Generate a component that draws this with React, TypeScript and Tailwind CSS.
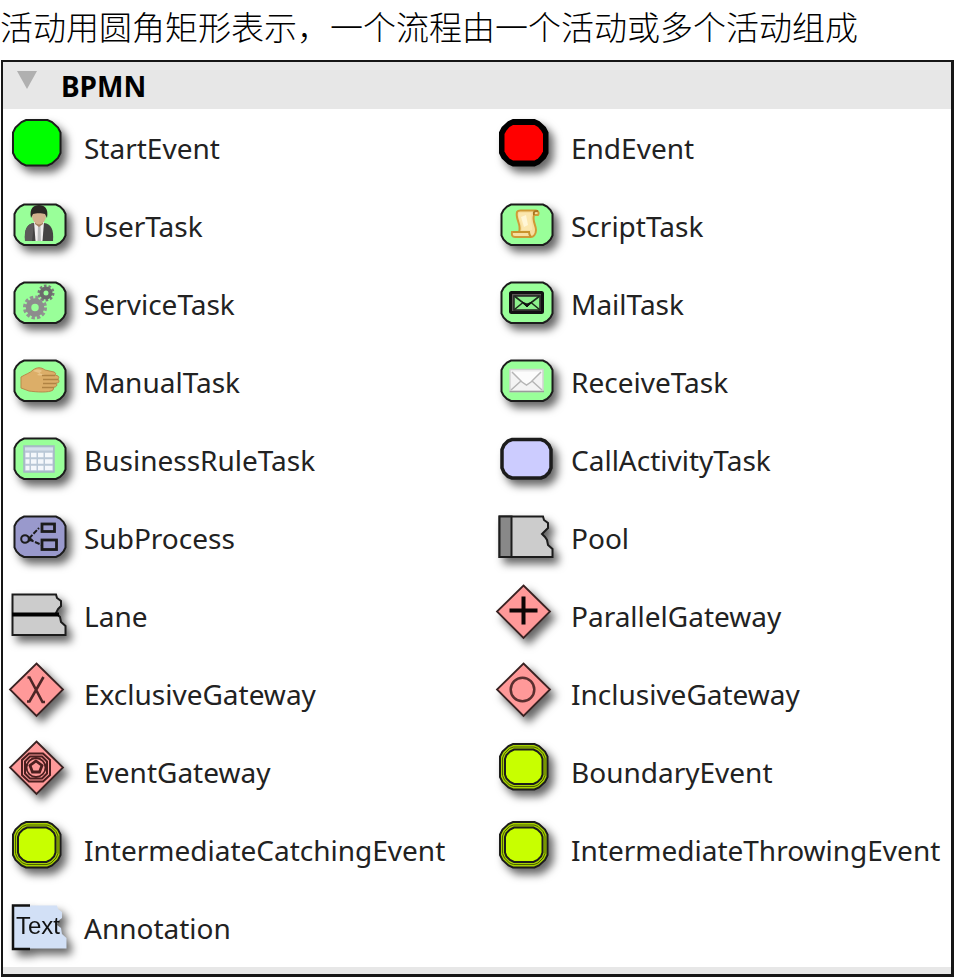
import React from 'react';

const SOFT = '#1c1c1c';
const GREEN = '#99ff99';

const Task = ({ fill = GREEN, heavy = false, children }: { fill?: string; heavy?: boolean; children?: React.ReactNode }) => (
  <>
    {heavy ? (
      <path d="M17 18.5H46L50 20 54 24 56 28.5V47L54 51.5 50 55.5 46 57H17L13 55.5 9 51.5 7 47V28.5L9 24 13 20Z" fill={fill} stroke={SOFT} strokeWidth="3.5" />
    ) : (
      <path d="M16 17.5H48L52 19.5 55.5 23 57.5 27V48.5L55.5 52.5 52 56 48 58H16L12 56 8.5 52.5 6.5 48.5V27L8.5 23 12 19.5Z" fill={fill} stroke={SOFT} strokeWidth="2" />
    )}
    {children}
  </>
);

const EVENT_PATH = 'M18 11H39.5L44 13 50 18.5 52.5 23.5V44L50 49 44 54.5 39.5 56.5H18L13.5 54.5 7.5 49 5 44V23.5L7.5 18.5 13.5 13Z';

const StartIcon = () => <path d={EVENT_PATH} fill="#00ff00" stroke={SOFT} strokeWidth="2" />;

const EndIcon = () => (
  <>
    <path d={EVENT_PATH} fill="#000" stroke="#000" strokeWidth="2" />
    <path d="M18 16H39.5L43 18 46 21.5 48 25V42.5L46 46 43 49.5 39.5 51.5H18L14.5 49.5 11.5 46 9.5 42.5V25L11.5 21.5 14.5 18Z" fill="#ff0000" />
  </>
);

const IntermediateIcon = () => (
  <>
    <path d={EVENT_PATH} fill="#a6d100" stroke={SOFT} strokeWidth="2" />
    <path d="M18.5 14H39L43 15.500 48 20.500 50 25V42.500L48 47 43 52 39 53.500H18.500L14.500 52 9.500 47 7.500 42.500V25L9.500 20.500 14.500 15.500Z" fill="none" stroke="#4c6000" strokeWidth="1" />
    <path d="M19 16.5H38.5L42.5 18.5 46 22 47.5 26V41.5L46 45.5 42.5 49 38.5 51H19L15 49 11.5 45.5 10 41.5V26L11.5 22 15 18.5Z" fill="#c8ff00" stroke={SOFT} strokeWidth="2" />
  </>
);

const Gateway = ({ children }: { children: React.ReactNode }) => (
  <>
    <path d="M28.5 8.5L55 34.5 28.5 61 2 34.5Z" fill="#ff9999" stroke="#3a2222" strokeWidth="1.8" />
    {children}
  </>
);

const UserIcon = () => (
  <Task>
    <path d="M17 54C16 42 19 37 26 36H36C43 37 46 42 45 54Z" fill="#454343" />
    <path d="M17 54C16 42 19 37 26 36L24 54Z" fill="#5c5a5a" />
    <path d="M26 35H36L34.5 54H27.5Z" fill="#f1eeee" />
    <path d="M30 39H32.5L33 54H29.5Z" fill="#bcbcbc" />
    <path d="M27 33H35V37L31 40 27 37Z" fill="#a58062" />
    <ellipse cx="31" cy="28.5" rx="7" ry="9" fill="#d3b08e" />
    <path d="M23 31C21 21 26 18 31 18S41 21 39 31L37 27C34 26 28 26 25 27Z" fill="#2b2724" />
  </Task>
);

const ScriptIcon = () => (
  <Task>
    <path d="M22 25C23 23 25 23.5 27 23.5H41C44 23.5 44 27 43 28H39C37 34 41 38 41 43 41 48 38 50 36 50H20C17 50 16.5 48 17 45H24C27 38 20 32 22 25Z" fill="#f7dfa0" stroke="#d09a35" strokeWidth="2" />
    <path d="M39 28C38 24 40 24 43 24" fill="none" stroke="#a8741f" strokeWidth="2" />
    <path d="M24 26H36C35 33 38 38 37 43H27C28 36 23 33 24 26Z" fill="#fbe7ae" />
    <path d="M26 30L31 28 33 38 29 40Z" fill="#fff6d6" />
    <path d="M18 45H34C34 48 35 49 36 50" fill="none" stroke="#c8932c" strokeWidth="2" />
  </Task>
);

const ServiceIcon = () => (
  <Task>
    <circle cx="27" cy="42.5" r="10" fill="none" stroke="#929292" strokeWidth="4" strokeDasharray="3.2 2.036" />
    <circle cx="27" cy="42.5" r="6.5" fill="none" stroke="#8d8d8d" strokeWidth="5.5" />
    <circle cx="38" cy="28" r="7" fill="none" stroke="#7a7a7a" strokeWidth="3" strokeDasharray="2.5 1.898" />
    <circle cx="38" cy="28" r="4.5" fill="none" stroke="#6c6c6c" strokeWidth="4" />
  </Task>
);

const ManualIcon = () => (
  <Task>
    <path d="M13 34C18 31 22 30 25 27 29 24 33 24 37 27L46 29C48 30 48 31 47 32L50 33C51 34 51 35 50 36L51 38C51 40 50 40 48 40L49 42C48 44 47 44 46 44L45 47C41 50 28 49 21 48L13 45Z" fill="#dcae68" stroke="#b88b4b" strokeWidth="1" />
    <path d="M25 28C28 26 32 26 34 28L29 32C31 33 34 32 37 32" fill="#e9c488" />
    <path d="M34 32.5H47M35 36.5H50M35 40.5H48M34 44.5H46" stroke="#b08343" strokeWidth="1.3" />
  </Task>
);

const MailIcon = () => (
  <Task>
    <rect x="15.5" y="27.5" width="32" height="20" rx="1" fill="#5e5957" stroke="#111" strokeWidth="3" />
    <rect x="19" y="31" width="26" height="14" fill="#8df08d" stroke="#222" strokeWidth="1.5" />
    <path d="M20 31.5L32 41 44 31.5M19.5 44.5L28 37.5M44.5 44.5L36 37.5" fill="none" stroke="#1c2c1c" strokeWidth="1.6" />
    <path d="M27 37L32 42 37 37 32 39Z" fill="#111" stroke="#111" />
  </Task>
);

const ReceiveIcon = () => (
  <Task>
    <rect x="15" y="26.5" width="33" height="22" fill="#f3f3f3" stroke="#d2d2d2" strokeWidth="1.5" />
    <path d="M17 29L27 39 31.5 42 36 39 46 29" fill="#fcfcfc" stroke="#b5b5b5" strokeWidth="1.5" />
    <path d="M16 47L26 38M47 47L37 38" fill="none" stroke="#b5b5b5" strokeWidth="1.5" />
    <path d="M14.5 48.5H49" stroke="#9a9a9a" strokeWidth="1.5" />
  </Task>
);

const RuleIcon = () => (
  <Task>
    <rect x="16" y="25" width="30" height="26" fill="#b9c7d6" stroke="#a4b6c4" strokeWidth="1.5" />
    <path d="M17 28H45" stroke="#d5e0ec" strokeWidth="3" />
    {[34, 40.5, 47].map((y) => (
      <path key={y} d={`M17.5 ${y}H21.5M23 ${y}H28.5M30 ${y}H35.5M37 ${y}H44.5`} stroke="#f4f7fb" strokeWidth="4.5" />
    ))}
  </Task>
);

const CallActivityIcon = () => <Task fill="#ccccff" heavy />;

const SubProcessIcon = () => (
  <Task fill="#9999cc">
    <g fill="none" stroke={SOFT}>
      <circle cx="17" cy="40" r="3.8" strokeWidth="2" />
      <rect x="34" y="25" width="12.5" height="7.5" strokeWidth="2.8" />
      <rect x="34" y="41" width="14.5" height="9.5" strokeWidth="2.8" />
      <path d="M21 39.5L31 29M21 40.5L34 46" strokeWidth="2" strokeDasharray="5 1.5" />
    </g>
    <path d="M20 37L25 40.5 20 43.5Z" fill={SOFT} />
  </Task>
);

const PoolIcon = () => (
  <>
    <path d="M4.5 17.5H48L49 21 53 24 53 29 50 32 47 35 50 38 52 41 53 46 57.5 50V58H4.5Z" fill="#cccccc" stroke={SOFT} strokeWidth="2" />
    <rect x="4.5" y="17.5" width="12" height="40.5" fill="#888" stroke={SOFT} strokeWidth="2" />
  </>
);

const LaneIcon = () => (
  <>
    <path d="M4.5 17.5H48L49 21 53 24 53 29 50 32 48 36 52 40 53 45 57.5 49V58H4.5Z" fill="#cccccc" stroke={SOFT} strokeWidth="2" />
    <path d="M4 37.5H51" stroke="#000" strokeWidth="4" />
  </>
);

const ParallelIcon = () => (
  <Gateway>
    <path d="M14.5 33.5H42.5M28.5 19.5V47.5" stroke="#0c0505" strokeWidth="4" />
  </Gateway>
);

const ExclusiveIcon = () => (
  <Gateway>
    <path d="M19.5 22.5H21.5L34.5 47H37M35.5 22L21.5 46.500H19" fill="none" stroke="#4c2626" strokeWidth="2.6" />
  </Gateway>
);

const InclusiveIcon = () => (
  <Gateway>
    <circle cx="27.5" cy="34.5" r="11.8" fill="none" stroke="#592f2f" strokeWidth="2.5" />
  </Gateway>
);

const EventGatewayIcon = () => (
  <Gateway>
    <g fill="none" stroke="#4a1f1f">
      <path d="M21 20.5H35L42 27V42L35 48.5H21L14 42V27Z" strokeWidth="2" />
      <path d="M22 23.5H34L39 28.5V40.5L34 45.5H22L17 40.5V28.5Z" strokeWidth="2" />
      <circle cx="28" cy="34.5" r="9.5" strokeWidth="1.8" />
      <path d="M28 28L34 32.5 31.5 39H24.5L22 32.5Z" strokeWidth="2.8" />
    </g>
  </Gateway>
);

const AnnotationIcon = () => (
  <>
    <path d="M5 16.5H49L50 20 54 23 54 29 50 32 49 36 53 39 54 45 58.5 49V59.5H5Z" fill="#d2e0f6" />
    <path d="M22 16.5H5V60H22" fill="none" stroke="#111" strokeWidth="2.5" />
    <text x="8" y="45" fontSize="24" fontFamily="Liberation Sans, Arial, sans-serif" fill="#111">Text</text>
  </>
);

const items: { name: string; icon: React.FC }[] = [
  { name: 'StartEvent', icon: StartIcon },
  { name: 'EndEvent', icon: EndIcon },
  { name: 'UserTask', icon: UserIcon },
  { name: 'ScriptTask', icon: ScriptIcon },
  { name: 'ServiceTask', icon: ServiceIcon },
  { name: 'MailTask', icon: MailIcon },
  { name: 'ManualTask', icon: ManualIcon },
  { name: 'ReceiveTask', icon: ReceiveIcon },
  { name: 'BusinessRuleTask', icon: RuleIcon },
  { name: 'CallActivityTask', icon: CallActivityIcon },
  { name: 'SubProcess', icon: SubProcessIcon },
  { name: 'Pool', icon: PoolIcon },
  { name: 'Lane', icon: LaneIcon },
  { name: 'ParallelGateway', icon: ParallelIcon },
  { name: 'ExclusiveGateway', icon: ExclusiveIcon },
  { name: 'InclusiveGateway', icon: InclusiveIcon },
  { name: 'EventGateway', icon: EventGatewayIcon },
  { name: 'BoundaryEvent', icon: IntermediateIcon },
  { name: 'IntermediateCatchingEvent', icon: IntermediateIcon },
  { name: 'IntermediateThrowingEvent', icon: IntermediateIcon },
  { name: 'Annotation', icon: AnnotationIcon },
];

const App: React.FC = () => {
  return (
    <main className="bg-white text-black font-['Noto_Sans','Noto_Sans_CJK_SC',sans-serif]">
      <p className="h-[60px] pt-1 whitespace-nowrap text-[33px] leading-[44px] font-light font-['Noto_Sans_CJK_SC',sans-serif]">
        活动用圆角矩形表示，一个流程由一个活动或多个活动组成
      </p>

      <section className="ml-px mr-[2px] border-2 border-r-3 border-b-3 border-[#161616]">
        <h2 className="bg-[#e7e7e7]">
          <button type="button" className="flex h-[47px] w-full items-center gap-6 pl-[14px] text-left">
            <svg viewBox="0 0 20 30" className="h-[30px] w-5 shrink-0">
              <path d="M0 0H20L10 18Z" fill="#b0b0b0" />
            </svg>
            <span className="text-[28px] leading-8 font-bold">BPMN</span>
          </button>
        </h2>

        <ul className="grid grid-cols-[487fr_461fr]">
          {items.map(({ name, icon: Icon }) => (
            <li key={name} className="flex h-[78px] items-center gap-2 pl-[5px]">
              <svg viewBox="0 0 68 78" className="h-[78px] w-[68px] shrink-0 overflow-visible drop-shadow-[5px_6px_4px_rgba(0,0,0,0.6)]">
                <Icon />
              </svg>
              <span className="text-[28px] leading-8 text-[#222]">{name}</span>
            </li>
          ))}
        </ul>

        <div className="h-[7px] bg-[#e7e7e7]" />
      </section>
    </main>
  );
};

export default App;
